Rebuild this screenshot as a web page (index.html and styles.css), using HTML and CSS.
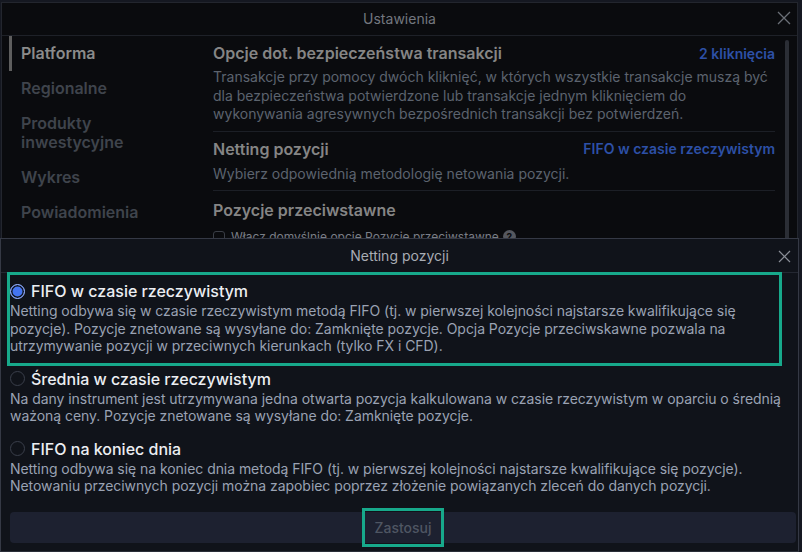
FILE: index.html
```html
<!DOCTYPE html>
<html lang="pl">
<head>
<meta charset="utf-8">
<title>Ustawienia</title>
<link rel="stylesheet" href="styles.css">
</head>
<body>
<div class="page">
  <section class="settings">
    <header class="settings-head">
      <span class="head-title">Ustawienia</span>
      <span class="close close-settings">
        <svg width="14" height="14" viewBox="0 0 14 14"><path d="M1 1L13 13M13 1L1 13" stroke="currentColor" stroke-width="1.3" fill="none"/></svg>
      </span>
    </header>
    <div class="settings-body">
      <nav class="sidebar">
        <div class="nav-item active">Platforma</div>
        <div class="nav-item">Regionalne</div>
        <div class="nav-item">Produkty<br>inwestycyjne</div>
        <div class="nav-item">Wykres</div>
        <div class="nav-item">Powiadomienia</div>
      </nav>
      <div class="content">
        <div class="section">
          <div class="row">
            <h3 class="sec-title">Opcje dot. bezpieczeństwa transakcji</h3>
            <span class="sec-value">2 kliknięcia</span>
          </div>
          <p class="sec-desc">Transakcje przy pomocy dwóch kliknięć, w których wszystkie transakcje muszą być dla bezpieczeństwa potwierdzone lub transakcje jednym kliknięciem do wykonywania agresywnych bezpośrednich transakcji bez potwierdzeń.</p>
        </div>
        <div class="section">
          <div class="row">
            <h3 class="sec-title">Netting pozycji</h3>
            <span class="sec-value">FIFO w czasie rzeczywistym</span>
          </div>
          <p class="sec-desc">Wybierz odpowiednią metodologię netowania pozycji.</p>
        </div>
        <div class="section last">
          <div class="row">
            <h3 class="sec-title">Pozycje przeciwstawne</h3>
          </div>
          <label class="check-row"><span class="checkbox"></span>Włacz domyślnie opcje Pozycje przeciwstawne <span class="help">?</span></label>
        </div>
      </div>
      <div class="scrollbar"></div>
    </div>
  </section>

  <section class="netting">
    <header class="netting-head">
      <span class="netting-title">Netting pozycji</span>
      <span class="close close-netting">
        <svg width="13" height="13" viewBox="0 0 13 13"><path d="M1 1L12 12M12 1L1 12" stroke="currentColor" stroke-width="1.2" fill="none"/></svg>
      </span>
    </header>
    <div class="netting-body">
      <div class="option selected">
        <div class="opt-head"><span class="radio on"></span><span class="opt-label">FIFO w czasie rzeczywistym</span></div>
        <p class="opt-desc">Netting odbywa się w czasie rzeczywistym metodą FIFO (tj. w pierwszej kolejności najstarsze kwalifikujące się pozycje). Pozycje znetowane są wysyłane do: Zamknięte pozycje. Opcja Pozycje przeciwskawne pozwala na utrzymywanie pozycji w przeciwnych kierunkach (tylko FX i CFD).</p>
      </div>
      <div class="option">
        <div class="opt-head"><span class="radio"></span><span class="opt-label">Średnia w czasie rzeczywistym</span></div>
        <p class="opt-desc">Na dany instrument jest utrzymywana jedna otwarta pozycja kalkulowana w czasie rzeczywistym w oparciu o średnią ważoną ceny. Pozycje znetowane są wysyłane do: Zamknięte pozycje.</p>
      </div>
      <div class="option">
        <div class="opt-head"><span class="radio"></span><span class="opt-label">FIFO na koniec dnia</span></div>
        <p class="opt-desc">Netting odbywa się na koniec dnia metodą FIFO (tj. w pierwszej kolejności najstarsze kwalifikujące się pozycje). Netowaniu przeciwnych pozycji można zapobiec poprzez złożenie powiązanych zleceń do danych pozycji.</p>
      </div>
      <div class="apply-bar"><span class="apply">Zastosuj</span></div>
    </div>
  </section>
</div>
</body>
</html>
```

FILE: styles.css
```css
* { box-sizing: border-box; }
html, body { margin: 0; padding: 0; }
body {
  background: #151821;
  font-family: Inter, "Noto Sans", "Liberation Sans", sans-serif;
  width: 802px;
  height: 552px;
  overflow: hidden;
}
.page {
  position: relative;
  width: 802px;
  height: 552px;
  padding: 2px 0 0 1px;
}

/* ---------- Settings window ---------- */
.settings {
  width: 797px;
  height: 550px;
  background: #0a0b0e;
  border: 1px solid #23262e;
  display: flex;
  flex-direction: column;
}
.settings-head {
  position: relative;
  height: 33px;
  flex: none;
  border-bottom: 1px solid #1e2128;
  display: flex;
  align-items: center;
  justify-content: center;
  padding-bottom: 1px;
}
.head-title {
  color: #73777f;
  font-size: 14px;
}
.close {
  position: absolute;
  display: flex;
}
.close-settings {
  right: 6px;
  top: 8px;
  color: #6b6f77;
}
.settings-body {
  flex: 1;
  display: flex;
  min-height: 0;
}
.sidebar {
  width: 199px;
  flex: none;
  padding: 0 0 0 7px;
}
.nav-item {
  border-left: 3px solid transparent;
  padding: 8px 0 8px 9px;
  font-size: 16px;
  line-height: 19px;
  font-weight: 600;
  color: #3f444c;
}
.nav-item.active {
  color: #8b8b8b;
  border-left-color: #5e5e5e;
}
.content {
  flex: 1;
  margin: 0 10px 0 12px;
}
.section {
  padding: 7px 0 7px;
  border-bottom: 1px solid #1c1f26;
}
.section + .section .sec-desc { margin-top: 6px; }
.section.last {
  border-bottom: none;
  padding-top: 9px;
}
.row {
  display: flex;
  justify-content: space-between;
  align-items: center;
}
.sec-title {
  margin: 0;
  font-size: 16px;
  line-height: 20px;
  font-weight: 600;
  color: #858585;
}
.sec-value {
  font-size: 14px;
  font-weight: 600;
  color: #2d50a6;
}
.sec-desc {
  margin: 5px 0 0;
  font-size: 14px;
  line-height: 18.5px;
  color: #5c636e;
}
.check-row {
  display: flex;
  align-items: center;
  margin-top: 9px;
  font-size: 12px;
  color: #7a7e86;
}
.checkbox {
  width: 12px;
  height: 12px;
  border: 1px solid #3a3e46;
  border-radius: 3px;
  margin-right: 6px;
}
.help {
  display: inline-flex;
  width: 13px;
  height: 13px;
  border-radius: 50%;
  background: #55585f;
  color: #0a0b0e;
  font-size: 10px;
  font-weight: 700;
  align-items: center;
  justify-content: center;
  margin-left: 4px;
}
.scrollbar {
  width: 4px;
  flex: none;
  margin: 4px 8px 0 0;
  background: #2b2e35;
  border-radius: 2px;
}

/* ---------- Netting dialog ---------- */
.netting {
  position: absolute;
  left: 0;
  top: 238px;
  width: 799px;
  height: 314px;
  background: #10131a;
  border: 1px solid #353945;
  border-bottom-color: #2a2e38;
  display: flex;
  flex-direction: column;
}
.netting-head {
  position: relative;
  height: 34px;
  flex: none;
  border-bottom: 1px solid #242832;
  display: flex;
  align-items: center;
  justify-content: center;
}
.netting-title {
  color: #a8acb4;
  font-size: 14px;
}
.close-netting {
  right: 7px;
  top: 11px;
  color: #8a8e97;
}
.netting-body {
  flex: 1;
  padding: 2px 11px 0 9px;
  display: flex;
  flex-direction: column;
}
.option {
  position: relative;
  padding: 5px 0 8px;
}
.option.selected::before {
  content: "";
  position: absolute;
  left: -3px;
  right: 5px;
  top: -3px;
  bottom: -3px;
  border: 3px solid #17a98b;
  pointer-events: none;
}
.opt-head {
  display: flex;
  align-items: center;
  height: 22px;
}
.radio {
  width: 15px;
  height: 15px;
  border-radius: 50%;
  border: 1px solid #3a3f4b;
  margin: 0 6px 0 0;
  flex: none;
}
.radio.on {
  background: #4474f0;
  border: 1.5px solid #9db6ff;
  box-shadow: inset 0 0 0 1.5px #10131a;
}
.opt-label {
  font-size: 16px;
  font-weight: 500;
  color: #eceef2;
}
.opt-desc {
  margin: 0;
  font-size: 14px;
  line-height: 17.5px;
  letter-spacing: -0.05px;
  color: #9aa2b3;
}
.apply-bar {
  margin: 9px -9px 0 0;
  height: 31px;
  background: #1d2130;
  border-radius: 4px;
  display: flex;
  align-items: center;
  justify-content: center;
}
.apply {
  display: inline-block;
  height: 33px;
  line-height: 33px;
  padding: 0 9px;
  outline: 3px solid #17a98b;
  font-size: 14px;
  font-weight: 500;
  color: #4f5663;
}
```
